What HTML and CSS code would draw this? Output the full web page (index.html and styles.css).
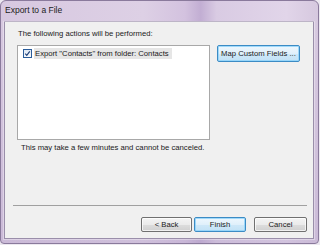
FILE: index.html
```html
<!DOCTYPE html>
<html>
<head>
<meta charset="utf-8">
<link rel="stylesheet" href="styles.css">
</head>
<body>
<div class="window">
  <div class="titlebar">Export to a File</div>
  <div class="client">
    <div class="main">
      <div class="label">The following actions will be performed:</div>
      <div class="row">
        <div class="listbox">
          <div class="item">
            <span class="check"><svg width="9" height="9" viewBox="0 0 9 9"><path d="M1.6 4.6 L3.6 6.8 L7.4 1.9" fill="none" stroke="#1a3e78" stroke-width="1.5"/></svg></span>
            <span class="item-text">Export "Contacts" from folder: Contacts</span>
          </div>
        </div>
        <button class="btn btn-blue btn-map">Map Custom Fields ...</button>
      </div>
      <div class="note">This may take a few minutes and cannot be canceled.</div>
    </div>
    <div class="separator"></div>
    <div class="footer">
      <button class="btn btn-back">&lt; Back</button>
      <button class="btn btn-blue btn-finish">Finish</button>
      <button class="btn btn-cancel">Cancel</button>
    </div>
  </div>
</div>
</body>
</html>
```
FILE: styles.css
```css
* { box-sizing: border-box; }
html, body { margin: 0; padding: 0; }
body {
  width: 320px;
  height: 245px;
  background: #ece8f0;
  font-family: "Liberation Sans", Arial, sans-serif;
  color: #1a1a1a;
  overflow: hidden;
}
.window {
  position: relative;
  width: 319px;
  height: 244px;
  border: 1px solid #8a7a9c;
  border-radius: 6px 6px 4px 4px;
  padding: 20px 4px 4px 3px;
  background:
    linear-gradient(180deg, rgba(255,255,255,0) 0%, rgba(255,255,255,0) 10%, rgba(180,160,200,0.35) 100%),
    linear-gradient(90deg, #d7c8e0 0%, #ddd0e5 45%, #d3c2df 58%, #c2aed3 63%, #d9cbe3 68%, #e1d5e9 90%, #d6c8df 100%);
  display: flex;
  flex-direction: column;
}
.window::after {
  content: "";
  position: absolute;
  inset: 20px 3px 3px 2px;
  border: 1px solid rgba(255,255,255,0.35);
  pointer-events: none;
}
.titlebar {
  position: absolute;
  left: 4px;
  top: 4px;
  font-size: 8.5px;
  line-height: 11px;
  color: #1a1a1a;
}
.client {
  flex: 1;
  border: 1px solid #9a8eaa;
  background: #f0f0f0;
  display: flex;
  flex-direction: column;
}
.main {
  padding: 7px 0 0 12px;
}
.label {
  margin-left: 1px;
  font-size: 7.7px;
  line-height: 10px;
  height: 10px;
}
.row {
  display: flex;
  align-items: flex-start;
  margin-top: 6px;
}
.listbox {
  width: 193px;
  height: 95px;
  border: 1px solid #a8a8a8;
  background: #ffffff;
  padding: 2px 0 0 5px;
}
.item {
  display: flex;
  align-items: center;
  height: 11px;
}
.check {
  width: 9px;
  height: 9px;
  border: 1px solid #2a5c9a;
  background: linear-gradient(#dfe9f5, #f6f9fc);
  display: flex;
  align-items: center;
  justify-content: center;
}
.check svg { display: block; width: 7px; height: 7px; }
.item-text {
  margin-left: 2px;
  padding: 0 3px 0 1px;
  background: #e6e6e6;
  font-size: 7.7px;
  line-height: 11px;
  height: 11px;
}
.btn {
  font-family: "Liberation Sans", Arial, sans-serif;
  font-size: 7.7px;
  color: #1a1a1a;
  padding: 0;
  border: 1px solid #707070;
  border-radius: 2px;
  background: linear-gradient(#f4f4f4 0%, #ebebeb 50%, #dddddd 51%, #d0d0d0 100%);
  height: 15px;
  line-height: 13px;
  box-shadow: inset 0 0 0 1px rgba(255,255,255,0.7);
}
.btn-blue {
  border-color: #3c8bc4;
  background: linear-gradient(#eef7fd 0%, #e0f0fb 50%, #cfe8f8 51%, #c2e2f6 100%);
  box-shadow: inset 0 0 0 1px rgba(140,210,250,0.8);
}
.btn-map {
  margin-left: 7px;
  width: 83px;
  height: 17px;
  line-height: 15px;
}
.note {
  margin: 3px 0 0 4px;
  font-size: 7.7px;
  line-height: 10px;
  height: 10px;
}
.separator {
  margin: 52px 6px 0 8px;
  height: 1px;
  background: #a0a0a0;
}
.footer {
  display: flex;
  justify-content: flex-end;
  padding-right: 6px;
  margin-top: 11px;
}
.btn-back { width: 51px; }
.btn-finish { width: 52px; margin-left: 2px; }
.btn-cancel { width: 53px; margin-left: 8px; }
```
